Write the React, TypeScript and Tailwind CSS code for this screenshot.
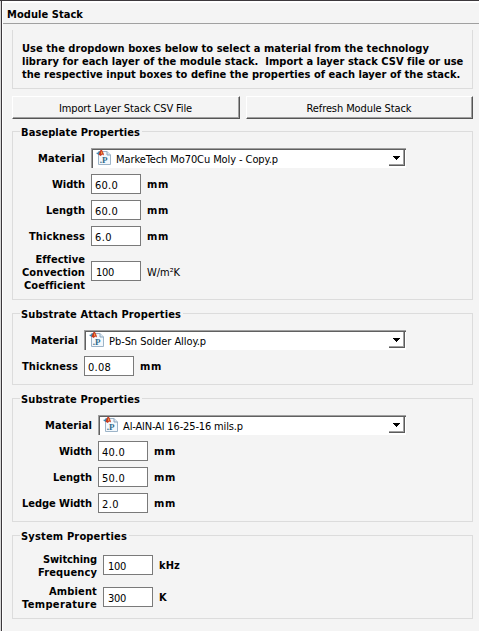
import { useLayoutEffect, useRef, type ReactNode } from "react";

// A single line of text whose tracking is adjusted so that it spans `w` pixels.
function T({ w, children, className = "" }: { w: number; children: string; className?: string }) {
  const ref = useRef<HTMLSpanElement>(null);
  useLayoutEffect(() => {
    const el = ref.current;
    if (!el) return;
    el.style.letterSpacing = "0px";
    const natural = el.getBoundingClientRect().width;
    el.style.letterSpacing = `${(w - natural) / children.length}px`;
  }, [w, children]);
  return (
    <span ref={ref} className={`inline-block whitespace-pre ${className}`}>
      {children}
    </span>
  );
}

function Group({ title, titleW, className, children }: { title: string; titleW: number; className: string; children: ReactNode }) {
  return (
    <fieldset className={`relative w-[461px] border border-[#dcdcdc] pl-[9px] ${className}`}>
      <div className="absolute -top-1.5 left-[7px] bg-[#f4f4f4] pr-0.5 pl-px font-bold">
        <T w={titleW}>{title}</T>
      </div>
      {children}
    </fieldset>
  );
}

type Line = [string, number];

function Row({ lines, col, className, children }: { lines: Line[]; col: string; className: string; children: ReactNode }) {
  return (
    <div className={`flex items-center gap-1.5 ${className}`}>
      <div className={`flex shrink-0 flex-col items-end font-bold ${lines.length > 1 ? "pt-0.5" : ""} ${col}`}>
        {lines.map(([text, w]) => (
          <T key={text} w={w}>{text}</T>
        ))}
      </div>
      {children}
    </div>
  );
}

function Field({ value, w, unit, unitW, light }: { value: string; w: number; unit: string; unitW: number; light?: boolean }) {
  return (
    <>
      <div className={`h-5 w-[50px] shrink-0 border border-[#7a7a7a] bg-white pt-1 ${value.includes(".") ? "pl-[3px]" : "pl-1"}`}>
        <T w={w} className="align-top">{value}</T>
      </div>
      <T w={unitW} className={light ? "pt-0.5" : "font-bold"}>{unit}</T>
    </>
  );
}

function FileIcon() {
  return (
    <svg width="16" height="16" viewBox="0 0 16 16" className="shrink-0">
      <path d="M2.500 1.500H11L14.500 5v9.500H2.500Z" fill="#f3f8fc" stroke="#9db4c8" />
      <path d="M11 1.500V5h3.500" fill="#dce8f1" stroke="#8aa5bd" />
      <path d="M0 3 2 2.500 4 1v3L2.500 5Z" fill="#3d86b0" />
      <path d="M2.500 4.500 4.500 0H6l1.500 3L8 5.500 6.500 4.500 4.500 6Z" fill="#c83920" />
      <path d="M5.500 1 6.500 3 5.500 4.500 5 3Z" fill="#f5a442" />
      <text x="3.800" y="12.500" fontFamily="Liberation Serif, serif" fontWeight="bold" fontSize="9" fill="#346b8d">.P</text>
    </svg>
  );
}

function Combo({ value, w, className }: { value: string; w: number; className: string }) {
  return (
    <div className={`flex h-5 shrink-0 border-t border-l border-[#a0a0a0] bg-white ${className}`}>
      <div className="flex w-full border-t border-l border-[#606060] pl-[3px]">
        <FileIcon />
        <T w={w} className="ml-1 pt-[3px]">{value}</T>
        <div className="mr-px ml-auto h-4 w-4 border-r border-b border-[#5b5b5b]">
          <div className="flex h-[15px] w-[15px] justify-center border-r border-b border-[#a0a0a0] pt-1.5">
            <svg width="7" height="4" viewBox="0 0 7 4" shapeRendering="crispEdges">
              <path d="M0 0h7v1H6v1H5v1H4v1H3V3H2V2H1V1H0Z" fill="#000" />
            </svg>
          </div>
        </div>
      </div>
    </div>
  );
}

function Button({ label, w, className }: { label: string; w: number; className: string }) {
  return (
    <button className={`block h-[23px] border-t border-l border-t-white border-l-white border-r border-b border-r-[#555] border-b-[#555] ${className}`}>
      <span className="flex h-[21px] items-center justify-center border-r border-b border-[#a0a0a0] pt-0.5">
        <T w={w}>{label}</T>
      </span>
    </button>
  );
}

const mat: Line[] = [["Material", 47]];

export default function App() {
  return (
    <div className="h-[631px] w-[479px] overflow-hidden border-t border-[#3c383c] bg-[#d8d8d8] pl-px font-['DejaVu_Sans_Condensed','DejaVu_Sans',sans-serif] text-[11px] leading-[13px] text-black [font-stretch:condensed]">
      <div className="h-full border-l border-[#3c383c]">
        <div className="h-full border-t-2 border-l border-white bg-[#f4f4f4]">
          <div className="h-[21px] border-b border-[#a0a0a0] pt-[5px] pl-1 font-bold">
            <T w={76} className="align-top">Module Stack</T>
          </div>
          <div className="pl-[9px]">
            <div className="mt-1.5 flex h-[59px] w-[461px] flex-col items-start border border-t-0 border-[#dcdcdc] pt-3 pl-[9px] font-bold">
              <T w={407}>Use the dropdown boxes below to select a material from the technology</T>
              <T w={441}>library for each layer of the module stack.  Import a layer stack CSV file or use</T>
              <T w={438}>the respective input boxes to define the properties of each layer of the stack.</T>
            </div>
            <div className="mt-[7px] flex gap-1.5">
              <Button label="Import Layer Stack CSV File" w={133} className="w-[228px]" />
              <Button label="Refresh Module Stack" w={105} className="w-[227px]" />
            </div>

            <Group title="Baseplate Properties" titleW={119} className="mt-3 h-[169px] pt-4">
              <Row lines={mat} col="w-[63px]" className="h-5">
                <Combo value="MarkeTech Mo70Cu Moly - Copy.p" w={162} className="w-[315px]" />
              </Row>
              <Row lines={[["Width", 33]]} col="w-[63px]" className="mt-1.5 h-5">
                <Field value="60.0" w={23} unit="mm" unitW={22} />
              </Row>
              <Row lines={[["Length", 39]]} col="w-[63px]" className="mt-1.5 h-5">
                <Field value="60.0" w={23} unit="mm" unitW={22} />
              </Row>
              <Row lines={[["Thickness", 56]]} col="w-[63px]" className="mt-1.5 h-5">
                <Field value="6.0" w={17} unit="mm" unitW={22} />
              </Row>
              <Row lines={[["Effective", 49], ["Convection", 63], ["Coefficient", 60]]} col="w-[63px]" className="mt-[5px] h-10">
                <Field value="100" w={18} unit="W/m²K" unitW={33} light />
              </Row>
            </Group>

            <Group title="Substrate Attach Properties" titleW={160} className="mt-[13px] h-[72px] pt-4">
              <Row lines={mat} col="w-[56px]" className="h-5">
                <Combo value="Pb-Sn Solder Alloy.p" w={97} className="w-[322px]" />
              </Row>
              <Row lines={[["Thickness", 56]]} col="w-[56px]" className="mt-1.5 h-5">
                <Field value="0.08" w={23} unit="mm" unitW={22} />
              </Row>
            </Group>

            <Group title="Substrate Properties" titleW={119} className="mt-[13px] h-[124px] pt-4">
              <Row lines={mat} col="w-[70px]" className="h-5">
                <Combo value="Al-AlN-Al 16-25-16 mils.p" w={120} className="w-[308px]" />
              </Row>
              <Row lines={[["Width", 33]]} col="w-[70px]" className="mt-1.5 h-5">
                <Field value="40.0" w={23} unit="mm" unitW={22} />
              </Row>
              <Row lines={[["Length", 39]]} col="w-[70px]" className="mt-1.5 h-5">
                <Field value="50.0" w={23} unit="mm" unitW={22} />
              </Row>
              <Row lines={[["Ledge Width", 70]]} col="w-[70px]" className="mt-1.5 h-5">
                <Field value="2.0" w={17} unit="mm" unitW={22} />
              </Row>
            </Group>

            <Group title="System Properties" titleW={106} className="mt-[13px] h-[84px] pt-4">
              <Row lines={[["Switching", 54], ["Frequency", 59]]} col="w-[75px]" className="h-[26px]">
                <Field value="100" w={18} unit="kHz" unitW={21} />
              </Row>
              <Row lines={[["Ambient", 48], ["Temperature", 75]]} col="w-[75px]" className="mt-1.5 h-[26px]">
                <Field value="300" w={18} unit="K" unitW={8} />
              </Row>
            </Group>
          </div>
        </div>
      </div>
    </div>
  );
}
